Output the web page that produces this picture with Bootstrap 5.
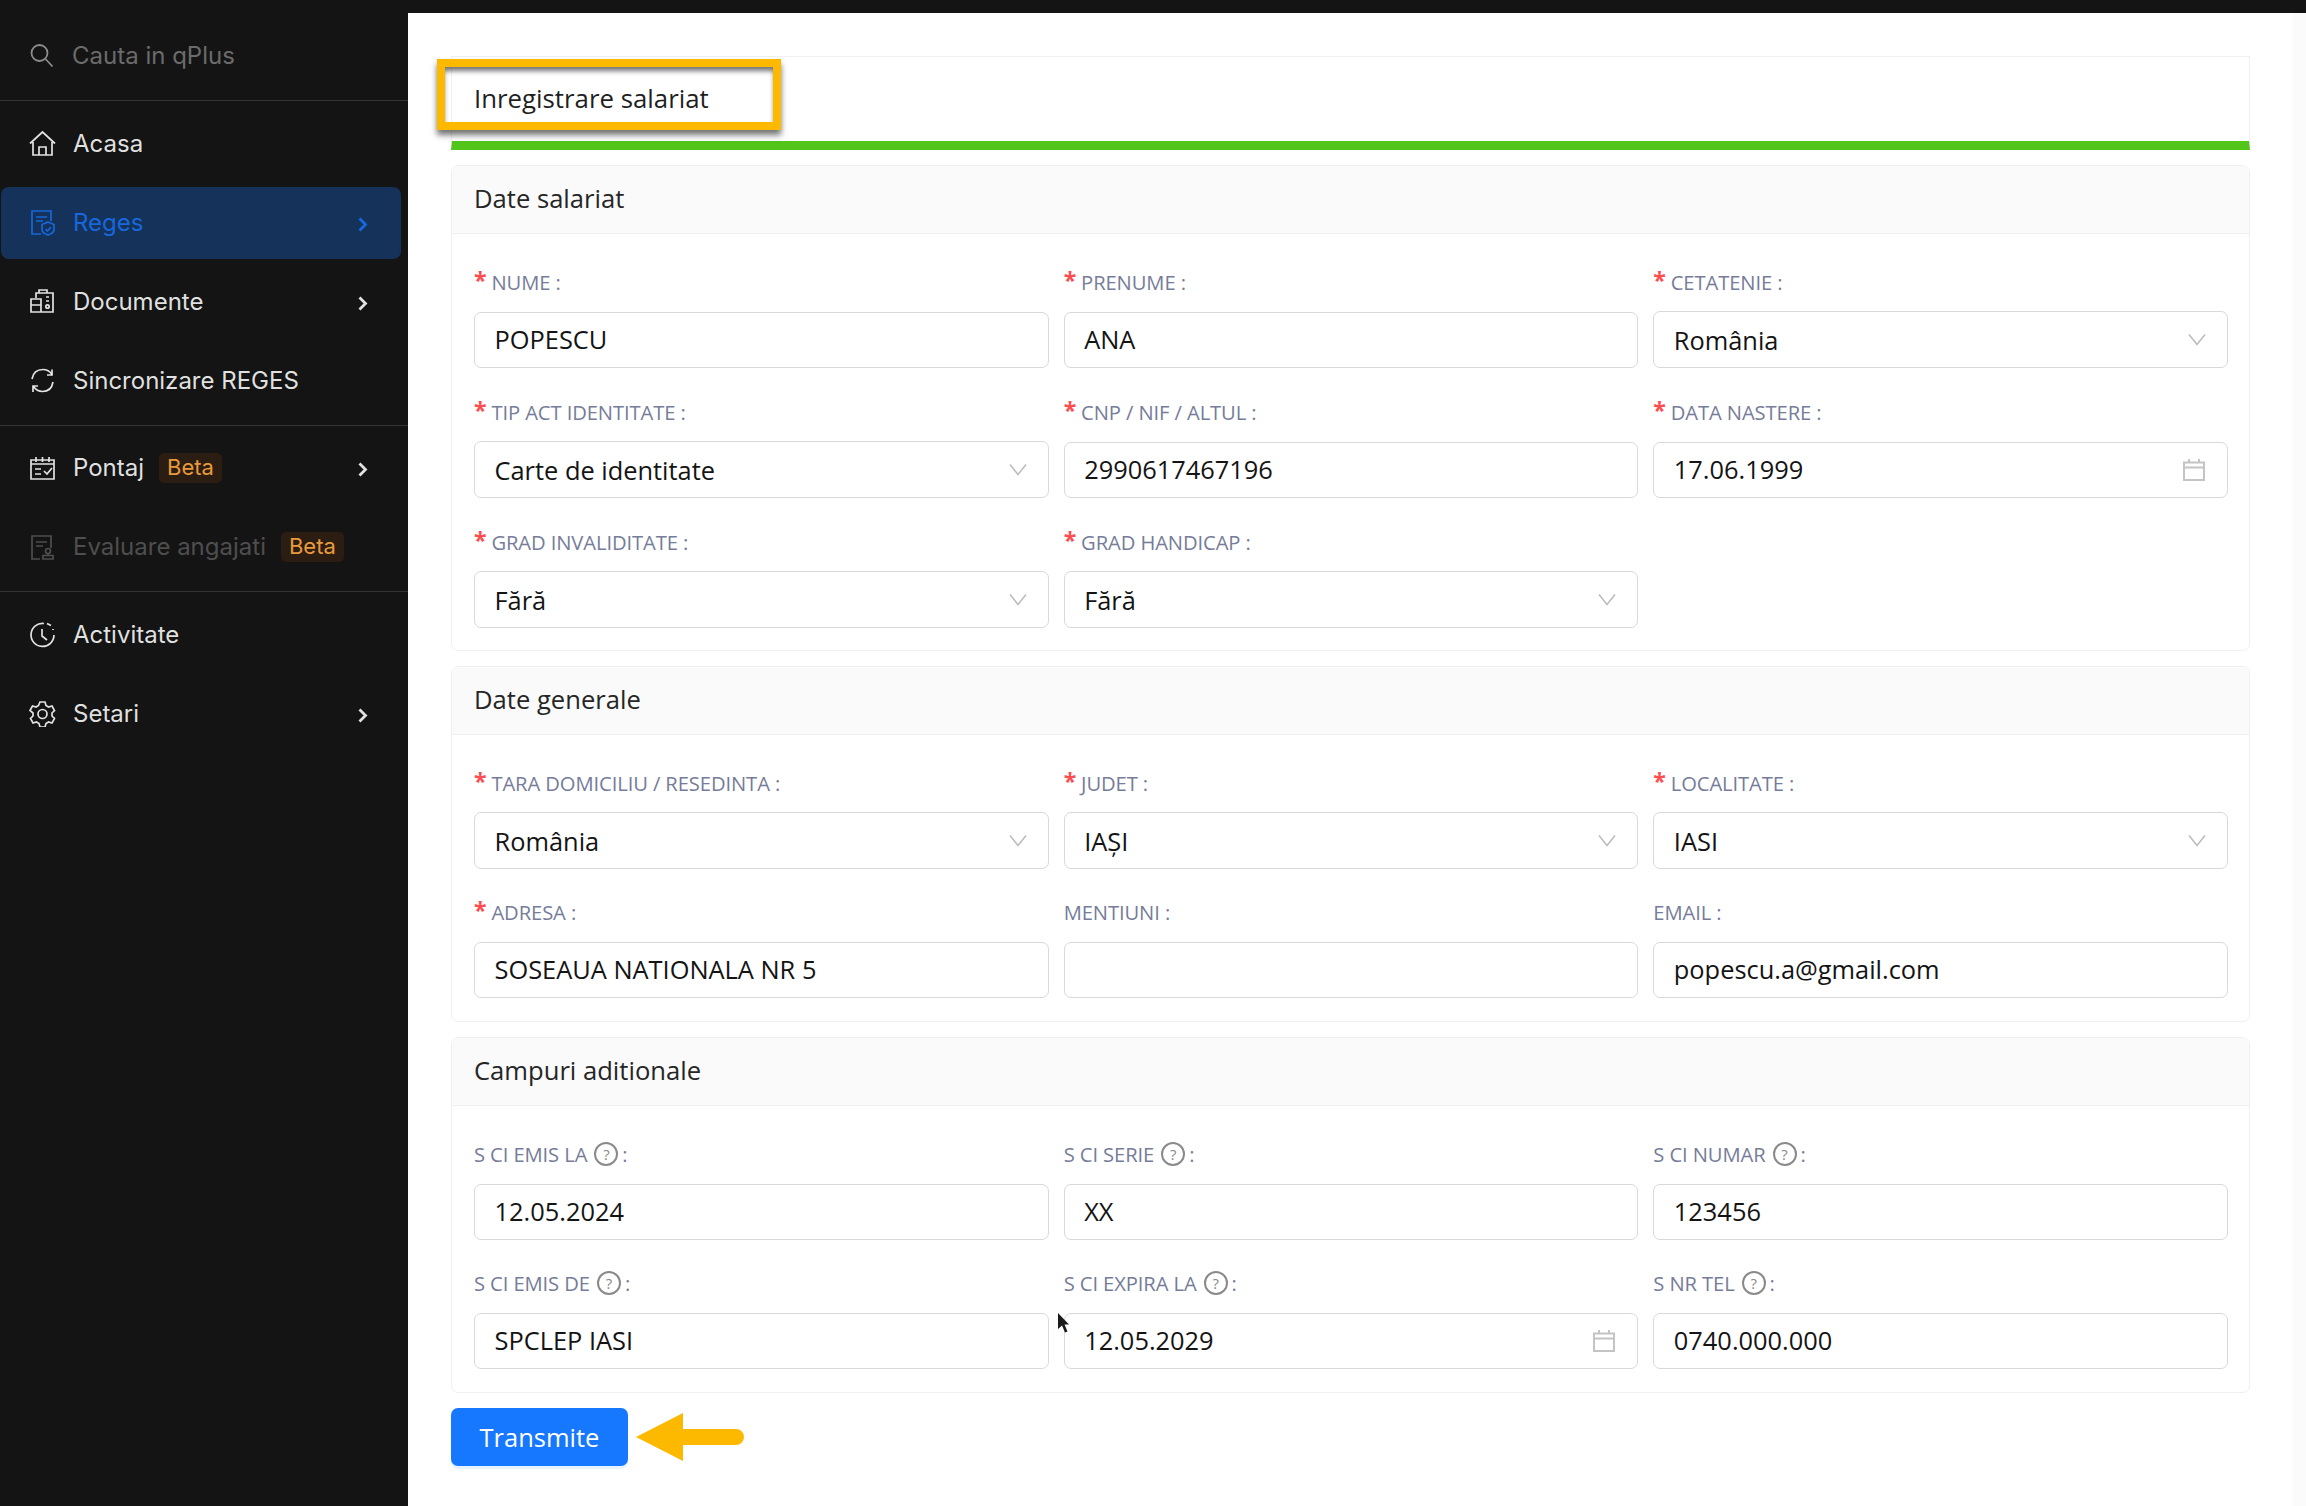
<!DOCTYPE html>
<html lang="en">
<head>
  <meta charset="UTF-8">
  <title>Inregistrare salariat</title>
  <link href="https://cdn.jsdelivr.net/npm/bootstrap@5.3.0/dist/css/bootstrap.min.css" rel="stylesheet">
  <style>
    body { background: #fff; font-family: "Open Sans", sans-serif; color: #1f1f1f; }
    .app { min-height: 1493px; }
    .topbar { height: 13px; background: #141414; }

    .sidebar { width: 408px; background: #141414; font-family: Inter, sans-serif; font-size: 24px; flex-shrink: 0; }
    .side-search { height: 88px; padding: 0 0 2px 29px; gap: 18px; color: #6b6b6b; border-bottom: 1px solid #353535; }
    .side-group { padding: 6.5px 7px 8px 1px; gap: 7px; border-bottom: 1px solid #353535; }
    .side-group:last-child { border-bottom: 0; }
    .side-link { height: 72px; padding: 0 33px 0 28px; gap: 17px; color: rgba(255,255,255,.88); border-radius: 8px; text-decoration: none; }
    .side-link svg.ico { width: 27px; height: 27px; flex-shrink: 0; }
    .side-link .chev { width: 10px; height: 15px; margin-left: auto; margin-top: 3px; }
    .side-link.active { background: #15325b; color: #1668dc; }
    .side-link.muted { color: #4e4e4e; }
    .beta { background: #2b1d11; color: #e89a3c; border-radius: 5px; font-size: 22px; padding: 1px 8px 2px; margin-left: -2px; line-height: 27px; }

    .main { padding: 43px 43px 0 43px; gap: 15px; }
    .title-card { height: 94px; border: 1px solid #f0f0f0; border-bottom: 9px solid #52c41a; padding: 0 22px 2px; font-size: 25.8px; }
    .callout { position: absolute; left: -15px; top: 2px; width: 344px; height: 71px; border: 8px solid #fdb900;
      box-shadow: 0 5px 6px rgba(0,0,0,.55), inset 0 5px 5px -1px rgba(0,0,0,.55); }
    .scroll-track { width: 13px; background: #fbfbfb; flex-shrink: 0; }

    .section { border: 1px solid #f0f0f0; border-radius: 7px; }
    .section .card-header { height: 68px; background: #fafafa; border-bottom: 1px solid #f0f0f0; padding: 0 22px 1px; font-size: 25.6px; font-weight: 500; color: #262626; display: flex; align-items: center; }
    .section .card-body { padding: 33px 21px 22px 22px; }
    .section.compact .card-body { padding-bottom: 23px; }
    .fields { --bs-gutter-x: 15px; --bs-gutter-y: 29px; }
    .compact .fields { --bs-gutter-y: 28px; }

    .form-label { display: flex; align-items: center; height: 30px; margin-bottom: 15px; font-size: 20.2px; font-weight: 500; color: #767c99; text-transform: uppercase; letter-spacing: -.1px; }
    .req::before { content: "*"; color: #ff4d4f; font-size: 23px; font-weight: 700; margin-right: 5px; line-height: 1; position: relative; top: -2px; }
    .help { width: 24px; height: 24px; border: 2px solid #8a8a8a; border-radius: 50%; color: #8a8a8a; font-size: 15px; line-height: 20px; text-align: center; margin: 0 4px 0 7px; flex-shrink: 0; }

    .form-control, .form-select { height: 56px; font-family: "Open Sans", sans-serif; font-size: 25.4px; color: #141414; padding: 0 20px 2px 19.5px; border: 1.5px solid #d9d9d9; border-radius: 7px; }
    .form-select { height: 57px; margin-top: -1px; padding: 2px 20px 0 19.5px; background-image: url("data:image/svg+xml,%3Csvg xmlns='http://www.w3.org/2000/svg' viewBox='0 0 18 12'%3E%3Cpath d='M1 1l8 10 8-10' fill='none' stroke='%23bdbdbd' stroke-width='1.6'/%3E%3C/svg%3E"); background-size: 18px 13px; background-position: right 21px center; }
    .date { background: url("data:image/svg+xml,%3Csvg xmlns='http://www.w3.org/2000/svg' viewBox='0 0 22 22'%3E%3Cpath d='M1 3.500h20v17.500h-20zM1 8.500h20M6 0v4M16 0v4' fill='none' stroke='%23c4c4c4' stroke-width='2'/%3E%3C/svg%3E") no-repeat right 22px center / 22px 22px; }

    .btn-send { width: 177px; height: 58px; background: #1677ff; color: #fff; font-size: 25.5px; border: 0; border-radius: 7px; padding: 0; box-shadow: 0 3px 0 rgba(5,145,255,.1); }
    .btn-send:hover { background: #1677ff; color: #fff; }
    .pointer { position: absolute; left: 1057px; top: 1300px; }
  </style>
</head>
<body>
<div class="topbar"></div>
<div class="d-flex app position-relative">
  <aside class="sidebar d-flex flex-column">
    <div class="side-search d-flex align-items-center">
      <svg width="25" height="25" viewBox="0 0 25 25" fill="none" stroke="#8c8c8c" stroke-width="1.8"><circle cx="10.500" cy="10" r="8"/><path d="M16.500 16l7 7.500"/></svg>
      <span>Cauta in qPlus</span>
    </div>
    <nav class="side-group nav flex-column">
      <a class="side-link d-flex align-items-center" href="#">
        <svg class="ico" viewBox="0 0 27 27" fill="none" stroke="currentColor" stroke-width="1.7"><path d="M1 13.500L13.500 2 26 13.500M4 12v13h19V12M10 25v-8h7v8"/></svg>
        <span>Acasa</span>
      </a>
      <a class="side-link active d-flex align-items-center" href="#">
        <svg class="ico" viewBox="0 0 27 27" fill="none" stroke="currentColor" stroke-width="1.7"><path d="M12 25H3V2h19v10M7 8h11M7 12h7"/><path d="M19 13l6 2.500v5c0 3-3 4.500-6 5.500-3-1-6-2.500-6-5.500v-5zM16.500 20l2 2 3.500-4"/></svg>
        <span>Reges</span>
        <svg class="chev" viewBox="0 0 10 15" fill="none" stroke="currentColor" stroke-width="2.800"><path d="M1.500 1.500l6 6-6 6"/></svg>
      </a>
      <a class="side-link d-flex align-items-center" href="#">
        <svg class="ico" viewBox="0 0 27 27" fill="none" stroke="currentColor" stroke-width="1.7"><path d="M7 10V5h17v19H2V11h10v13M2 17h10M10 5V2h8v3M17 9h3M17 13h3"/><circle cx="18.500" cy="18.500" r="1.700"/></svg>
        <span>Documente</span>
        <svg class="chev" viewBox="0 0 10 15" fill="none" stroke="currentColor" stroke-width="2.800"><path d="M1.500 1.500l6 6-6 6"/></svg>
      </a>
      <a class="side-link d-flex align-items-center" href="#">
        <svg class="ico" viewBox="0 0 27 27" fill="none" stroke="currentColor" stroke-width="1.7"><path d="M3 12C4 6 8 2.500 14 2.500c4 0 7 2 9 5M24 15c-1 6-5 9.500-10.500 9.500-4 0-7-2-9-5"/><path d="M23 2.500v5.500h-5M4 25v-6h5"/></svg>
        <span>Sincronizare REGES</span>
      </a>
    </nav>
    <nav class="side-group nav flex-column">
      <a class="side-link d-flex align-items-center" href="#">
        <svg class="ico" viewBox="0 0 27 27" fill="none" stroke="currentColor" stroke-width="1.7"><path d="M2 5h23v19H2zM2 9h23M7 2v5M13.500 2v5M20 2v5M6 14h6M6 19h6M15 16l3 3 5-6"/></svg>
        <span>Pontaj</span>
        <span class="beta">Beta</span>
        <svg class="chev" viewBox="0 0 10 15" fill="none" stroke="currentColor" stroke-width="2.800"><path d="M1.500 1.500l6 6-6 6"/></svg>
      </a>
      <a class="side-link muted d-flex align-items-center" href="#">
        <svg class="ico" viewBox="0 0 27 27" fill="none" stroke="currentColor" stroke-width="1.7"><path d="M11 25H3V2h19v12M7 8h11M7 12h7"/><circle cx="19" cy="17" r="2.500"/><path d="M19 19.500v2M14 25v-3.500h10V25z"/></svg>
        <span>Evaluare angajati</span>
        <span class="beta">Beta</span>
      </a>
    </nav>
    <nav class="side-group nav flex-column">
      <a class="side-link d-flex align-items-center" href="#">
        <svg class="ico" viewBox="0 0 27 27" fill="none" stroke="currentColor" stroke-width="1.7"><path d="M15 2.500A11.500 11.500 0 1 0 25 14M13 8v7l5 4M18 2.500l4 2M24 8v1"/></svg>
        <span>Activitate</span>
      </a>
      <a class="side-link d-flex align-items-center" href="#">
        <svg class="ico" viewBox="0 0 27 27" fill="none" stroke="currentColor" stroke-width="1.7"><path d="M11 2h5l1 3.500 2.500 1.500 3.500-1 2.500 4.500-2.500 2.500v3l2.500 2.500-2.500 4.500-3.500-1-2.500 1.500-1 3.500h-5l-1-3.500-2.500-1.500-3.500 1-2.500-4.500 2.500-2.500v-3L1 10.500 3.500 6l3.500 1 2.500-1.500z"/><circle cx="13.500" cy="14" r="4.500"/></svg>
        <span>Setari</span>
        <svg class="chev" viewBox="0 0 10 15" fill="none" stroke="currentColor" stroke-width="2.800"><path d="M1.500 1.500l6 6-6 6"/></svg>
      </a>
    </nav>
  </aside>

  <main class="main flex-grow-1 d-flex flex-column align-items-stretch">
    <div class="title-card position-relative d-flex align-items-center">
      <span>Inregistrare salariat</span>
      <div class="callout"></div>
    </div>

    <section class="section card">
      <div class="card-header">Date salariat</div>
      <div class="card-body">
        <div class="row fields">
          <div class="col-4"><label class="form-label req">Nume :</label><input class="form-control" value="POPESCU"></div>
          <div class="col-4"><label class="form-label req">Prenume :</label><input class="form-control" value="ANA"></div>
          <div class="col-4"><label class="form-label req">Cetatenie :</label><select class="form-select"><option>România</option></select></div>
          <div class="col-4"><label class="form-label req">Tip act identitate :</label><select class="form-select"><option>Carte de identitate</option></select></div>
          <div class="col-4"><label class="form-label req">CNP / NIF / Altul :</label><input class="form-control" value="2990617467196"></div>
          <div class="col-4"><label class="form-label req">Data nastere :</label><input class="form-control date" value="17.06.1999"></div>
          <div class="col-4"><label class="form-label req">Grad invaliditate :</label><select class="form-select"><option>Fără</option></select></div>
          <div class="col-4"><label class="form-label req">Grad handicap :</label><select class="form-select"><option>Fără</option></select></div>
        </div>
      </div>
    </section>

    <section class="section compact card">
      <div class="card-header">Date generale</div>
      <div class="card-body">
        <div class="row fields">
          <div class="col-4"><label class="form-label req">Tara domiciliu / resedinta :</label><select class="form-select"><option>România</option></select></div>
          <div class="col-4"><label class="form-label req">Judet :</label><select class="form-select"><option>IAȘI</option></select></div>
          <div class="col-4"><label class="form-label req">Localitate :</label><select class="form-select"><option>IASI</option></select></div>
          <div class="col-4"><label class="form-label req">Adresa :</label><input class="form-control" value="SOSEAUA NATIONALA NR 5"></div>
          <div class="col-4"><label class="form-label">Mentiuni :</label><input class="form-control"></div>
          <div class="col-4"><label class="form-label">Email :</label><input class="form-control" value="popescu.a@gmail.com"></div>
        </div>
      </div>
    </section>

    <section class="section compact card">
      <div class="card-header">Campuri aditionale</div>
      <div class="card-body">
        <div class="row fields">
          <div class="col-4"><label class="form-label">S CI emis la<span class="help">?</span>:</label><input class="form-control" value="12.05.2024"></div>
          <div class="col-4"><label class="form-label">S CI serie<span class="help">?</span>:</label><input class="form-control" value="XX"></div>
          <div class="col-4"><label class="form-label">S CI numar<span class="help">?</span>:</label><input class="form-control" value="123456"></div>
          <div class="col-4"><label class="form-label">S CI emis de<span class="help">?</span>:</label><input class="form-control" value="SPCLEP IASI"></div>
          <div class="col-4"><label class="form-label">S CI expira la<span class="help">?</span>:</label><input class="form-control date" value="12.05.2029"></div>
          <div class="col-4"><label class="form-label">S nr tel<span class="help">?</span>:</label><input class="form-control" value="0740.000.000"></div>
        </div>
      </div>
    </section>

    <div class="d-flex align-items-center">
      <button class="btn btn-send" type="button">Transmite</button>
      <svg class="ms-2" width="108" height="50" viewBox="0 0 108 50" fill="#fdb900"><path d="M0 25L47 1v16h53a8 8 0 0 1 0 16H47v16z"/></svg>
    </div>
  </main>
  <div class="scroll-track"></div>

  <svg class="pointer" width="13" height="20" viewBox="0 0 13 20"><path d="M1 0v16l4-3.500 3 7 2.500-1-3-7H12z" fill="#1a1a1a"/></svg>
</div>
</body>
</html>
